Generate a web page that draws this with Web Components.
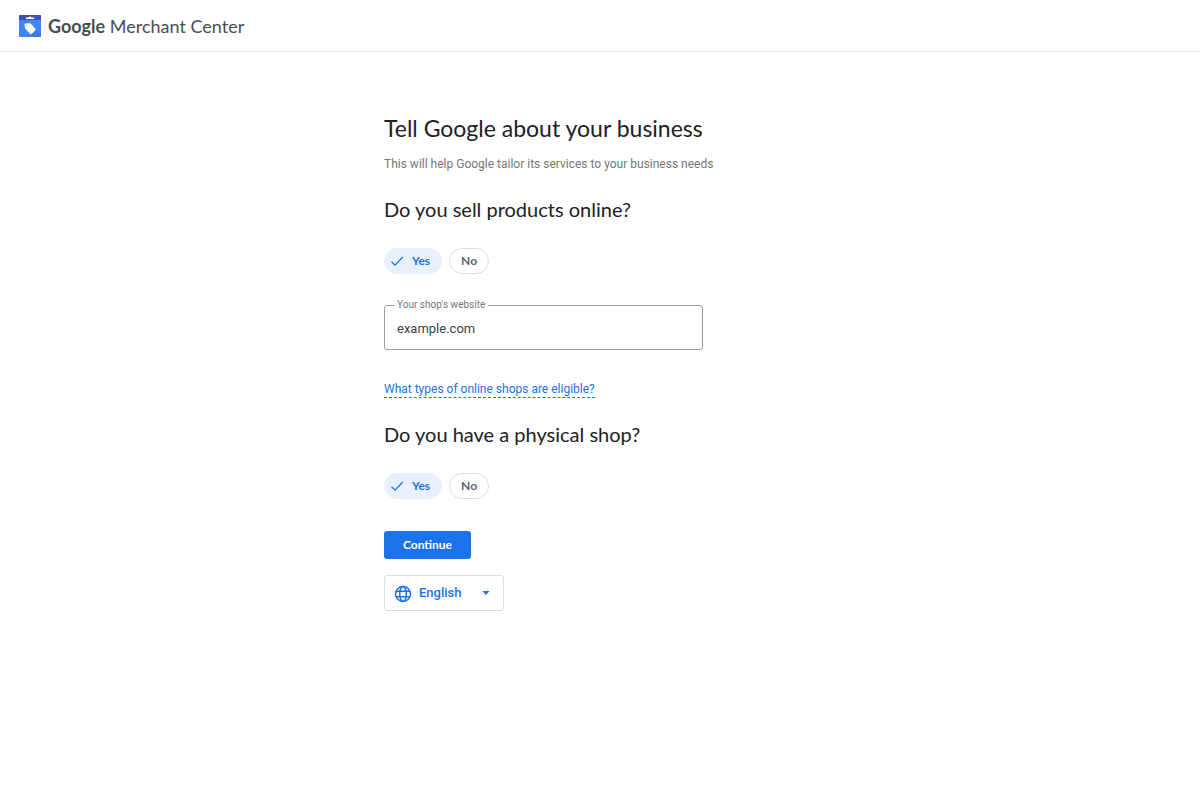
<!DOCTYPE html>
<html lang="en">
<head>
<meta charset="utf-8">
<meta name="viewport" content="width=device-width, initial-scale=1">
<title>Google Merchant Center</title>
<style>
    :root {
        --blue: #1a73e8;
        --text: #202124;
        --muted: #74777b;
        --line: #dadce0;
        --display: Lato, "Liberation Sans", sans-serif;
    }

    body {
        margin: 0;
        background: #fff;
        color: var(--text);
        font-family: Roboto, "Liberation Sans", sans-serif;
    }

    main {
        box-sizing: border-box;
        max-width: 432px;
        margin: 0 auto;
        padding: 62px 0 40px;
    }
</style>
</head>
<body>
<app-header><b>Google</b> Merchant Center</app-header>
<main>
    <page-intro heading="Tell Google about your business">This will help Google tailor its services to your business needs</page-intro>
    <yes-no-question name="online">
        Do you sell products online?
        <shop-field slot="details" label="Your shop's website" value="example.com"></shop-field>
        <help-link slot="details" href="#eligible">What types of online shops are eligible?</help-link>
    </yes-no-question>
    <yes-no-question name="physical">Do you have a physical shop?</yes-no-question>
    <primary-button>Continue</primary-button>
    <language-picker></language-picker>
</main>

<script>
class AppHeader extends HTMLElement {
    constructor() {
        super();
        this.attachShadow({ mode: 'open' }).innerHTML = `
            <style>
                :host {
                    display: block;
                    border-bottom: 1px solid #e4e5e7;
                }
                header {
                    display: flex;
                    align-items: center;
                    gap: 7px;
                    height: 51px;
                    padding: 0 19px;
                }
                svg {
                    width: 22px;
                    height: 22px;
                }
                span {
                    font: 400 18px/24px var(--display);
                    color: #4a4d51;
                }
                ::slotted(b) {
                    font-weight: 700;
                }
            </style>
            <header>
                <svg viewBox="0 0 22 22" aria-hidden="true">
                    <rect width="22" height="22" rx="1" fill="#4285f4"/>
                    <path d="M15 12l7 7v2a1 1 0 0 1-1 1h-6l-5-4z" fill="#3b78e0"/>
                    <path d="M1 0h20a1 1 0 0 1 1 1v4H0V1a1 1 0 0 1 1-1z" fill="#3f51b5"/>
                    <path d="M7.500 2.500h2a1.700 1.700 0 0 1 3 0h2a.8.8 0 0 1 0 1.600h-7a.8.8 0 0 1 0-1.600z" fill="#fff"/>
                    <path d="M6.200 8.500l4.500-.3q.6 0 1 .4l4.800 5.300q.5.6 0 1.200l-3.900 4q-.6.5-1.200-.1L6.300 13.800q-.4-.4-.4-.9L5.500 9.200q0-.6.7-.7z" fill="#fff"/>
                    <circle cx="7.600" cy="10.300" r=".7" fill="#9fc1f9"/>
                </svg>
                <span><slot></slot></span>
            </header>
        `;
    }
}

class PageIntro extends HTMLElement {
    connectedCallback() {
        this.attachShadow({ mode: 'open' }).innerHTML = `
            <style>
                :host {
                    display: block;
                    margin-bottom: 25px;
                }
                h1 {
                    margin: 0 0 14px;
                    font: 400 23px/28px var(--display);
                }
                p {
                    margin: 0;
                    font-size: 12px;
                    line-height: 16px;
                    color: var(--muted);
                }
            </style>
            <h1>${this.getAttribute('heading')}</h1>
            <p><slot></slot></p>
        `;
    }
}

class YesNoQuestion extends HTMLElement {
    connectedCallback() {
        const name = this.getAttribute('name');

        this.attachShadow({ mode: 'open' }).innerHTML = `
            <style>
                :host {
                    display: block;
                }
                h2 {
                    margin: 0 0 27px;
                    font: 400 20px/24px var(--display);
                }
                .chips {
                    display: flex;
                    gap: 7px;
                    margin-bottom: 25px;
                }
                .chip {
                    display: grid;
                    height: 26px;
                    font: 700 12px/16px var(--display);
                    color: #5f6368;
                    cursor: pointer;
                }
                /* the radio fills the chip, its text sits in the same cell */
                .chip > * {
                    grid-area: 1 / 1;
                }
                input {
                    appearance: none;
                    box-sizing: border-box;
                    width: 100%;
                    height: 100%;
                    margin: 0;
                    border: 1px solid var(--line);
                    border-radius: 13px;
                    cursor: pointer;
                }
                .chip span {
                    display: flex;
                    align-items: center;
                    gap: 8px;
                    padding: 0 12px;
                    pointer-events: none;
                }
                svg {
                    display: none;
                    width: 14px;
                    height: 14px;
                }
                input:checked {
                    border-color: #e8f0fe;
                    background: #e8f0fe;
                }
                input:checked + span {
                    padding-left: 6px;
                    color: var(--blue);
                }
                input:checked + span svg {
                    display: block;
                }
            </style>
            <h2 id="question"><slot></slot></h2>
            <div class="chips" role="radiogroup" aria-labelledby="question">
                ${this.chip(name, 'Yes', true)}
                ${this.chip(name, 'No', false)}
            </div>
            <slot name="details"></slot>
        `;
    }

    chip(name, text, checked) {
        return `
            <label class="chip">
                <input type="radio" name="${name}" value="${text}" ${checked ? 'checked' : ''}>
                <span>
                    <svg viewBox="0 0 14 14" aria-hidden="true"><path d="M1.500 7.800l3.500 3.400L12.800 3" fill="none" stroke="currentColor" stroke-width="1.200"/></svg>
                    ${text}
                </span>
            </label>
        `;
    }
}

class ShopField extends HTMLElement {
    connectedCallback() {
        this.attachShadow({ mode: 'open' }).innerHTML = `
            <style>
                :host {
                    display: block;
                    max-width: 319px;
                    margin-bottom: 31px;
                }
                fieldset {
                    min-width: 0;
                    margin: 0;
                    padding: 0 12px;
                    border: 1px solid #9a9da0;
                    border-radius: 3px;
                }
                legend {
                    margin-left: -3px;
                    padding: 0 3px;
                    font-size: 10px;
                    line-height: 12px;
                    color: var(--muted);
                }
                input {
                    display: block;
                    box-sizing: border-box;
                    width: 100%;
                    height: 38px;
                    padding: 0 0 4px;
                    border: 0;
                    outline: 0;
                    background: none;
                    font: 400 13px/20px Roboto, "Liberation Sans", sans-serif;
                    color: #3c4043;
                }
            </style>
            <fieldset>
                <legend><label for="field">${this.getAttribute('label')}</label></legend>
                <input id="field" type="text" value="${this.getAttribute('value')}">
            </fieldset>
        `;
    }
}

class HelpLink extends HTMLElement {
    connectedCallback() {
        this.attachShadow({ mode: 'open' }).innerHTML = `
            <style>
                :host {
                    display: flex;
                    margin-bottom: 24px;
                }
                a {
                    border-bottom: 1px dashed var(--blue);
                    font-size: 12px;
                    line-height: 16px;
                    color: var(--blue);
                    text-decoration: none;
                }
            </style>
            <a href="${this.getAttribute('href')}"><slot></slot></a>
        `;
    }
}

class PrimaryButton extends HTMLElement {
    constructor() {
        super();
        this.attachShadow({ mode: 'open' }).innerHTML = `
            <style>
                :host {
                    display: block;
                    margin: 32px 0 16px;
                }
                button {
                    display: block;
                    min-width: 87px;
                    height: 28px;
                    padding: 0 18px;
                    border: 0;
                    border-radius: 3px;
                    background: var(--blue);
                    font: 700 12px/16px var(--display);
                    color: #fff;
                    cursor: pointer;
                }
            </style>
            <button type="button"><slot></slot></button>
        `;
    }
}

class LanguagePicker extends HTMLElement {
    constructor() {
        super();
        this.attachShadow({ mode: 'open' }).innerHTML = `
            <style>
                :host {
                    display: flex;
                    color: var(--blue);
                }
                .box {
                    display: grid;
                    grid-template-columns: 36px 61px 21px;
                    align-items: center;
                    height: 34px;
                    border: 1px solid var(--line);
                    border-radius: 3px;
                }
                .box > * {
                    grid-row: 1;
                }
                select {
                    grid-column: 1 / -1;
                    appearance: none;
                    width: 100%;
                    height: 100%;
                    margin: 0;
                    padding: 0 24px 0 34px;
                    border: 0;
                    background: none;
                    font: 500 13px/20px Roboto, "Liberation Sans", sans-serif;
                    color: inherit;
                }
                svg {
                    pointer-events: none;
                }
                .globe {
                    grid-column: 1;
                    justify-self: center;
                    width: 18px;
                    height: 18px;
                    margin-top: 2px;
                }
                .caret {
                    grid-column: 3;
                    width: 8px;
                    height: 4px;
                }
            </style>
            <div class="box">
                <select aria-label="Language">
                    <option>English</option>
                </select>
                <svg class="globe" viewBox="0 0 18 18" fill="none" stroke="currentColor" stroke-width="1.500" aria-hidden="true">
                    <circle cx="9" cy="9" r="7.500"/>
                    <ellipse cx="9" cy="9" rx="3.300" ry="7.500"/>
                    <path d="M2 6.300h14M2 11.700h14"/>
                </svg>
                <svg class="caret" viewBox="0 0 8 4" fill="currentColor" aria-hidden="true"><path d="M.5 0h7L4 4z"/></svg>
            </div>
        `;
    }
}

customElements.define('app-header', AppHeader);
customElements.define('page-intro', PageIntro);
customElements.define('yes-no-question', YesNoQuestion);
customElements.define('shop-field', ShopField);
customElements.define('help-link', HelpLink);
customElements.define('primary-button', PrimaryButton);
customElements.define('language-picker', LanguagePicker);
</script>
</body>
</html>
